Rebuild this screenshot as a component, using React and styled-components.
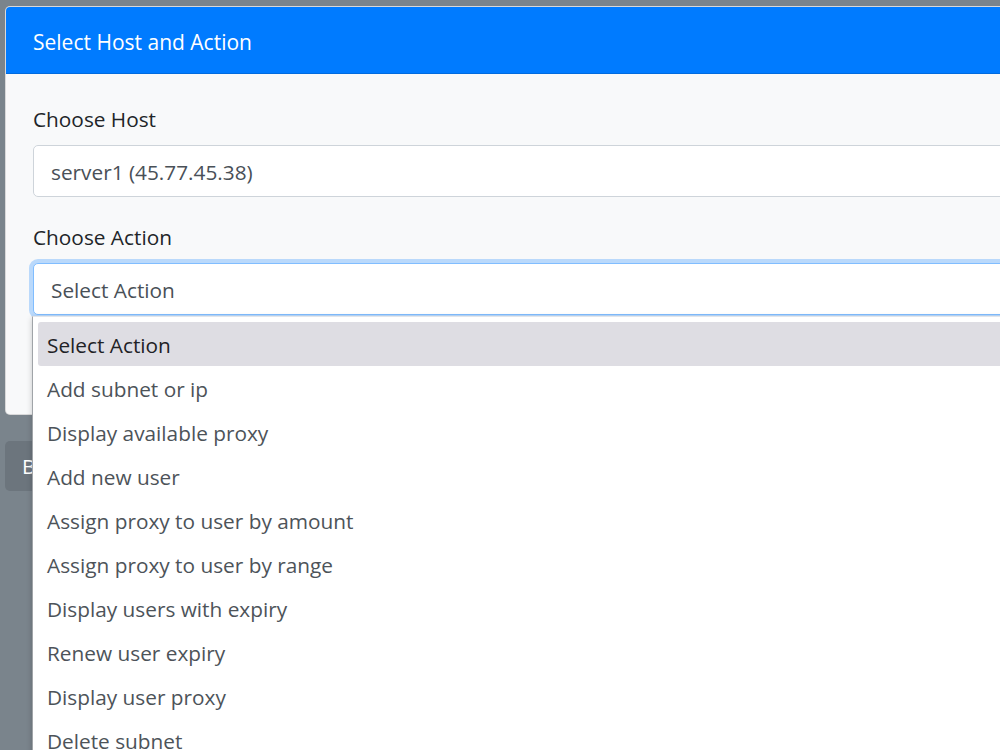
import React from 'react'
import styled, { createGlobalStyle } from 'styled-components'

const GlobalStyle = createGlobalStyle`
  html, body {
    margin: 0;
    padding: 0;
    overflow: hidden;
    background: #7a848c;
    font-family: "Open Sans", "Noto Sans", sans-serif;
  }
`

const Page = styled.div`
  position: relative;
  width: 1000px;
  height: 750px;
  padding: 6px 0 0 5px;
  box-sizing: border-box;
`

const Card = styled.div`
  width: 1100px;
  border: 1px solid rgba(0, 0, 0, 0.125);
  border-radius: 5px;
  overflow: hidden;
  background: #f8f9fa;
`

const CardHeader = styled.div`
  background: #007bff;
  color: #fff;
  height: 67px;
  padding: 3px 27px 0;
  box-sizing: border-box;
  display: flex;
  align-items: center;
  font-size: 21px;
  border-bottom: 1px solid rgba(0, 0, 0, 0.125);
`

const CardBody = styled.div`
  padding: 29px 27px 99px;
`

const Group = styled.div`
  margin-bottom: ${p => (p.last ? 0 : 24)}px;
  position: relative;
`

const Label = styled.div`
  font-size: 20.8px;
  line-height: 30px;
  padding-top: 1px;
  color: #212529;
  margin-bottom: 11px;
`

const Field = styled.div`
  height: 52px;
  box-sizing: border-box;
  background: #fff;
  border: 1px solid ${p => (p.focused ? '#80bdff' : '#ced4da')};
  border-radius: 5px;
  padding: 1px 17px 0;
  display: flex;
  align-items: center;
  font-size: 20.8px;
  color: #495057;
  box-shadow: ${p => (p.focused ? '0 0 0 4px rgba(0, 123, 255, 0.25)' : 'none')};
`

const BackButton = styled.div`
  margin-top: 26px;
  width: 90px;
  height: 50px;
  border-radius: 5px;
  background: #6c757d;
  color: #fff;
  display: flex;
  align-items: center;
  padding-left: 17px;
  box-sizing: border-box;
  font-size: 20.8px;
`

const Dropdown = styled.div`
  position: absolute;
  left: 32px;
  top: 316px;
  width: 1000px;
  height: 480px;
  background: #fff;
  border-left: 1px solid #a0a4a8;
  border-top: 1px solid #e4e6ea;
  padding: 5px 0 0 5px;
  box-sizing: border-box;
  box-shadow: 0 2px 6px rgba(0, 0, 0, 0.2);
`

const Option = styled.div`
  height: 44px;
  display: flex;
  align-items: center;
  padding: 1px 0 0 9px;
  box-sizing: border-box;
  font-size: 20.8px;
  color: ${p => (p.selected ? '#1f2226' : '#4d5359')};
  background: ${p => (p.selected ? '#dedde3' : 'transparent')};
  border-radius: 3px 0 0 3px;
`

const actions = [
  'Select Action',
  'Add subnet or ip',
  'Display available proxy',
  'Add new user',
  'Assign proxy to user by amount',
  'Assign proxy to user by range',
  'Display users with expiry',
  'Renew user expiry',
  'Display user proxy',
  'Delete subnet'
]

export default function App () {
  return (
    <Page>
      <GlobalStyle />
      <Card>
        <CardHeader>Select Host and Action</CardHeader>
        <CardBody>
          <Group>
            <Label>Choose Host</Label>
            <Field>server1 (45.77.45.38)</Field>
          </Group>
          <Group last>
            <Label>Choose Action</Label>
            <Field focused>Select Action</Field>
          </Group>
        </CardBody>
      </Card>
      <BackButton>Back</BackButton>
      <Dropdown>
        {actions.map((a, i) => (
          <Option key={a} selected={i === 0}>{a}</Option>
        ))}
      </Dropdown>
    </Page>
  )
}
